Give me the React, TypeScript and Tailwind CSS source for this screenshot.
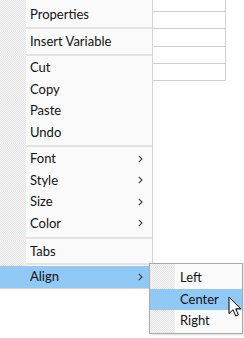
import React from 'react';

type Item = { label: string; sub?: boolean; active?: boolean } | 'sep' | 'sep-wide' | 'sep-thin';

const gutter =
  'bg-[repeating-conic-gradient(#e4e4e4_0%_25%,#f6f6f6_0%_50%)] bg-[length:2px_2px]';

const items: Item[] = [
  { label: 'Properties' },
  'sep',
  { label: 'Insert Variable' },
  'sep',
  { label: 'Cut' },
  { label: 'Copy' },
  { label: 'Paste' },
  { label: 'Undo' },
  'sep',
  { label: 'Font', sub: true },
  { label: 'Style', sub: true },
  { label: 'Size', sub: true },
  { label: 'Color', sub: true },
  'sep-wide',
  { label: 'Tabs' },
  'sep-thin',
  { label: 'Align', sub: true, active: true },
];

const Chevron: React.FC = () => (
  <svg width="5" height="8" viewBox="0 0 5 8" className="mr-[9px]">
    <polyline points="0.8,0.8 4,4 0.8,7.2" fill="none" stroke="#3a3a3a" strokeWidth="1.1" />
  </svg>
);

const Separator: React.FC<{ h: string; line: string }> = ({ h, line }) => (
  <div className={`flex ${h}`}>
    <div className={`w-[26px] ${gutter}`} />
    <div className={`flex-1 flex flex-col bg-[#fafafa] ${line}`}>
      <div className="h-[2px] bg-[#e3e3e3]" />
    </div>
  </div>
);

const MenuRow: React.FC<{ label: string; sub?: boolean; active?: boolean; h?: string }> = ({
  label,
  sub,
  active,
  h = 'h-[21.5px]',
}) =>
  active ? (
    <div className={`flex items-center ${h} bg-[#90c8f6] pl-[30px]`}>
      <span className="flex-1">{label}</span>
      {sub && <Chevron />}
    </div>
  ) : (
    <div className={`flex ${h}`}>
      <div className={`w-[26px] ${gutter}`} />
      <div className="flex-1 flex items-center bg-[#fafafa] pl-[4px]">
        <span className="flex-1">{label}</span>
        {sub && <Chevron />}
      </div>
    </div>
  );

const Cursor: React.FC = () => (
  <svg width="14" height="22" viewBox="0 0 14 22" className="absolute left-[228px] top-[296px]">
    <path
      d="M1 1 L1 17.5 L5 13.8 L7.8 20 L10.4 18.9 L7.7 12.8 L12.8 12.8 Z"
      fill="#ffffff"
      stroke="#000000"
      strokeWidth="1"
      strokeLinejoin="round"
    />
  </svg>
);

export default function App() {
  return (
    <div
      className="relative w-[244px] h-[338px] overflow-hidden bg-white text-[13px] text-[#111111] pt-[1px]"
      style={{ fontFamily: 'Lato, "Noto Sans", sans-serif' }}
    >
      <div className="flex items-start -mt-[1px]">
        {/* main context menu */}
        <div className="w-[153px] flex flex-col border-r border-b border-[#d4d4d4]">
          <div className="flex h-[4px]">
            <div className={`w-[26px] ${gutter}`} />
            <div className="flex-1 bg-[#fafafa]" />
          </div>
          {items.map((it, i) => {
            if (it === 'sep') return <Separator key={i} h="h-[5px]" line="justify-center" />;
            if (it === 'sep-wide') return <Separator key={i} h="h-[7px]" line="justify-center" />;
            if (it === 'sep-thin') return <Separator key={i} h="h-[3.5px]" line="justify-start" />;
            return <MenuRow key={i} {...it} h={it.active ? 'h-[22px]' : 'h-[21.5px]'} />;
          })}
        </div>

        {/* table behind the menu */}
        <div className="w-[73px] flex flex-col border-r border-[#cfcfcf]">
          <div className="h-[12px] border-b border-[#cfcfcf]" />
          <div className="h-[17px] border-b border-[#cfcfcf]" />
          <div className="h-[18px] border-b border-[#cfcfcf]" />
          <div className="h-[17px] border-b border-[#cfcfcf]" />
          <div className="h-[17px] border-b border-[#cfcfcf]" />
        </div>
      </div>

      {/* Align submenu */}
      <div className="absolute left-[149px] top-[263px] w-[94px] flex flex-col border border-[#a9a9a9] bg-[#fafafa] shadow-[1px_1px_2px_rgba(0,0,0,0.15)]">
        <div className="flex h-[3px]">
          <div className={`w-[25px] ${gutter}`} />
          <div className="flex-1" />
        </div>
        {['Left', 'Center', 'Right'].map((l) =>
          l === 'Center' ? (
            <div key={l} className="flex items-center h-[21.5px] bg-[#90c8f6] pl-[30px]">
              {l}
            </div>
          ) : (
            <div key={l} className="flex h-[21.5px]">
              <div className={`w-[25px] ${gutter}`} />
              <div className="flex-1 flex items-center pl-[5px]">{l}</div>
            </div>
          ),
        )}
        <div className="flex h-[1px]">
          <div className={`w-[25px] ${gutter}`} />
          <div className="flex-1" />
        </div>
      </div>

      <Cursor />
    </div>
  );
}
